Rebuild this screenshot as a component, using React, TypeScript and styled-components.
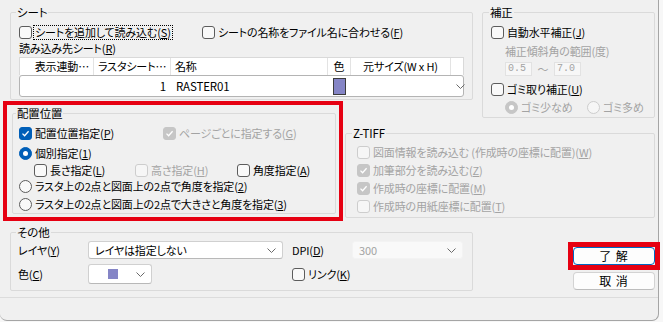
import type { ReactNode } from "react";
import styled, { createGlobalStyle } from "styled-components";

const GlobalStyle = createGlobalStyle`
  html, body {
    margin: 0;
    padding: 0;
  }
  body {
    width: 663px;
    height: 322px;
    overflow: hidden;
    background: #f7f7f7;
    font-family: "Noto Sans CJK JP", "Noto Sans", sans-serif;
    font-size: 11px;
  }
`;

const RED = "#e60012";
const DISABLED = "#a3a3a3";
const ACCENT = "#005fb8";

const Dialog = styled.div`
  box-sizing: border-box;
  width: 659px;
  height: 321px;
  background: #f0f0f0;
  border-right: 1px solid #a5a5a5;
  border-bottom: 1px solid #a5a5a5;
  border-radius: 0 0 7px 7px;
  color: #000;
  font-size: 11px;
  letter-spacing: -0.15px;
  font-feature-settings: "palt";
  line-height: 16px;
  display: flex;
  flex-direction: column;

  u {
    text-underline-offset: 1px;
  }
`;

const Body = styled.div`
  display: grid;
  grid-template-columns: 7px 333px 2px 128px 9px 173px;
  grid-template-rows: 94px 20px 104px 69px;
  padding: 5px 0 0 3px;
`;

const Footer = styled.div`
  margin-top: 5px;
  border-top: 1px solid #dcdcdc;
  flex: 1;
`;

const Group = styled.fieldset<{ $h: number; $pad?: number }>`
  box-sizing: border-box;
  margin: 0;
  min-width: 0;
  padding: 0 ${(p) => p.$pad ?? 8}px;
  height: ${(p) => p.$h}px;
  border: 1px solid #dadada;
  border-radius: 2px;
  align-self: start;
`;

const Legend = styled.legend<{ $x?: number }>`
  padding: 0 1px;
  margin-left: ${(p) => p.$x ?? -3}px;
  line-height: 14px;
  font-size: 11.5px;
`;

const SheetGroup = styled(Group)`
  grid-column: 2 / 5;
  grid-row: 1;
`;

const CorrectGroup = styled(Group)`
  grid-column: 6;
  grid-row: 1 / 3;
`;

const Highlight = styled.div`
  grid-column: 1 / 3;
  grid-row: 2 / 4;
  margin-top: 2px;
  height: 120px;
  box-sizing: border-box;
  border: 4px solid ${RED};
  padding: 1px 3px 0 5px;
`;

const ZGroup = styled(Group)`
  grid-column: 4 / 7;
  grid-row: 3;
  margin-top: 7px;
`;

const OtherGroup = styled(Group)`
  grid-column: 2 / 5;
  grid-row: 4;
  margin-top: 2px;
`;

const Row = styled.div<{ $mt?: number; $indent?: number; $disabled?: boolean }>`
  display: flex;
  align-items: center;
  height: 16px;
  white-space: nowrap;
  margin-top: ${(p) => p.$mt ?? 0}px;
  padding-left: ${(p) => p.$indent ?? 0}px;
  color: ${(p) => (p.$disabled ? DISABLED : "inherit")};
`;

const Option = styled.label<{ $w?: number; $disabled?: boolean }>`
  display: flex;
  align-items: center;
  gap: 3px;
  height: 16px;
  white-space: nowrap;
  color: ${(p) => (p.$disabled ? DISABLED : "#000")};
  ${(p) => (p.$w ? `width: ${p.$w}px; flex: none;` : "")}
`;

const Caption = styled.span<{ $focus?: boolean }>`
  ${(p) =>
    p.$focus
      ? `outline: 1px dotted #000; line-height: 13px; padding: 0 1px; margin-left: -1px;`
      : ""}
`;

const Box = styled.span<{ $checked?: boolean; $disabled?: boolean; $round?: boolean }>`
  box-sizing: border-box;
  width: 13px;
  height: 13px;
  flex: none;
  border-radius: ${(p) => (p.$round ? "50%" : "3px")};
  display: inline-flex;
  align-items: center;
  justify-content: center;
  border: 1px solid
    ${(p) =>
      p.$checked
        ? p.$disabled
          ? "#c6c6c6"
          : ACCENT
        : p.$disabled
          ? "#cdcdcd"
          : "#5c5c5c"};
  background: ${(p) =>
    p.$checked ? (p.$disabled ? "#c6c6c6" : ACCENT) : p.$disabled ? "#f6f6f6" : "#f9f9f9"};
`;

const Dot = styled.span`
  width: 5px;
  height: 5px;
  border-radius: 50%;
  background: #fff;
`;

type ChoiceProps = {
  radio?: boolean;
  checked?: boolean;
  disabled?: boolean;
  focus?: boolean;
  w?: number;
  children: ReactNode;
};

const Choice = ({ radio, checked, disabled, focus, w, children }: ChoiceProps) => (
  <Option $w={w} $disabled={disabled}>
    <Box $checked={checked} $disabled={disabled} $round={radio}>
      {checked && radio && <Dot />}
      {checked && !radio && (
        <svg width="9" height="9" viewBox="0 0 9 9">
          <polyline points="1.5,4.6 3.6,6.7 7.6,2.3" fill="none" stroke="#fff" strokeWidth="1.3" />
        </svg>
      )}
    </Box>
    <Caption $focus={focus}>{children}</Caption>
  </Option>
);

const Chevron = () => (
  <svg width="9" height="5" viewBox="0 0 9 5">
    <polyline points="0.5,0.5 4.5,4.5 8.5,0.5" fill="none" stroke="#6a6a6a" strokeWidth="1" />
  </svg>
);

/* list of raster sheets */
const COLS = "74px 77px 157px 23px 100px 1fr";

const Table = styled.div`
  margin-top: 1px;
`;

const HeadRow = styled.div`
  box-sizing: border-box;
  display: grid;
  grid-template-columns: ${COLS};
  height: 18px;
  background: #fff;
  border: 1px solid #d9d9d9;
  border-bottom: none;
`;

const HeadCell = styled.div<{ $align?: string }>`
  border-right: 1px solid #e3e3e3;
  padding: 0 4px;
  line-height: 17px;
  overflow: hidden;
  white-space: nowrap;
  text-align: ${(p) => p.$align ?? "left"};

  &:last-child {
    border-right: none;
  }
`;

const DataRow = styled.div`
  box-sizing: border-box;
  display: grid;
  grid-template-columns: ${COLS};
  align-items: center;
  height: 22px;
  background: #fff;
  border: 1px solid #b4b4b4;
  border-radius: 3px;
  font-size: 11.5px;
`;

const DataCell = styled.div<{ $align?: string }>`
  padding: 0 5px;
  white-space: nowrap;
  display: flex;
  justify-content: ${(p) =>
    p.$align === "right" ? "flex-end" : p.$align === "center" ? "center" : "flex-start"};
`;

const Swatch = styled.span<{ $size: number; $edge?: boolean }>`
  box-sizing: border-box;
  display: inline-block;
  width: ${(p) => p.$size}px;
  height: ${(p) => p.$size}px;
  background: #8585c6;
  border: ${(p) => (p.$edge ? "1px solid #3c3c3c" : "none")};
`;

/* correction range */
const RangeRow = styled.div`
  display: flex;
  align-items: center;
  margin-top: 3px;
  padding-left: 14px;
  height: 14px;
`;

const NumField = styled.span`
  box-sizing: border-box;
  width: 27px;
  height: 14px;
  border: 1px solid #e2e2e2;
  background: #f7f7f7;
  color: ${DISABLED};
  font-family: "Liberation Mono", monospace;
  font-size: 10px;
  letter-spacing: 0;
  line-height: 12px;
  padding-left: 2px;
`;

const Tilde = styled.span`
  width: 22px;
  text-align: center;
  color: ${DISABLED};
`;

/* other */
const OtherGrid = styled.div`
  display: grid;
  grid-template-columns: 70px 195px 9px 60px 111px;
  grid-template-rows: 18px 20px;
  row-gap: 5px;
  align-items: center;
  margin-top: 2px;
  margin-left: -1px;
`;

const Select = styled.div<{ $w?: number; $disabled?: boolean; $center?: boolean }>`
  box-sizing: border-box;
  height: 100%;
  width: ${(p) => (p.$w ? `${p.$w}px` : "auto")};
  display: flex;
  align-items: center;
  justify-content: space-between;
  padding: 0 6px 0 ${(p) => (p.$center ? 19 : 6)}px;
  background: ${(p) => (p.$disabled ? "#f9f9f9" : "#fff")};
  border: 1px solid ${(p) => (p.$disabled ? "#f3f3f3" : "#d0d0d0")};
  border-bottom-color: ${(p) => (p.$disabled ? "#f3f3f3" : "#b8b8b8")};
  border-radius: 3px;
  color: ${(p) => (p.$disabled ? DISABLED : "#000")};
  white-space: nowrap;
`;

const Actions = styled.div`
  grid-column: 6;
  grid-row: 4;
  display: flex;
  flex-direction: column;
  align-items: flex-end;
  padding-top: 19px;
  margin-right: -5px;
`;

const FocusMark = styled.div`
  border: 5px solid ${RED};
`;

const Button = styled.button<{ $focused?: boolean }>`
  box-sizing: border-box;
  width: 82px;
  height: 18px;
  margin: ${(p) => (p.$focused ? "0" : "2px 5px 0 0")};
  padding: 0;
  background: #fdfdfd;
  border: 1px solid ${(p) => (p.$focused ? "#0067c0" : "#d3d3d3")};
  border-bottom-color: ${(p) => (p.$focused ? "#0067c0" : "#bdbdbd")};
  border-radius: 4px;
  font-family: inherit;
  font-size: 12px;
  line-height: 16px;
  color: #000;
  letter-spacing: 1px;
  white-space: pre;
`;

export default function App() {
  return (
    <>
      <GlobalStyle />
      <Dialog>
        <Body>
          <SheetGroup $h={95}>
            <Legend>シート</Legend>
            <Row $mt={5}>
              <Choice w={183} focus>
                シートを追加して読み込む(<u>S</u>)
              </Choice>
              <Choice>
                シートの名称をファイル名に合わせる(<u>F</u>)
              </Choice>
            </Row>
            <Row>
              <span>
                読み込み先シート(<u>R</u>)
              </span>
            </Row>
            <Table>
              <HeadRow>
                <HeadCell $align="right">表示連動…</HeadCell>
                <HeadCell $align="right">ラスタシート…</HeadCell>
                <HeadCell>名称</HeadCell>
                <HeadCell $align="center">色</HeadCell>
                <HeadCell $align="center">元サイズ(W x H)</HeadCell>
                <HeadCell />
              </HeadRow>
              <DataRow>
                <DataCell />
                <DataCell $align="right">1</DataCell>
                <DataCell>RASTER01</DataCell>
                <DataCell $align="center">
                  <Swatch $size={17} $edge />
                </DataCell>
                <DataCell />
                <DataCell $align="right">
                  <Chevron />
                </DataCell>
              </DataRow>
            </Table>
          </SheetGroup>

          <CorrectGroup $h={113}>
            <Legend $x={-2}>補正</Legend>
            <Row $mt={5}>
              <Choice>
                自動水平補正(<u>J</u>)
              </Choice>
            </Row>
            <Row $mt={3} $indent={14} $disabled>
              補正傾斜角の範囲(度)
            </Row>
            <RangeRow>
              <NumField>0.5</NumField>
              <Tilde>～</Tilde>
              <NumField>7.0</NumField>
            </RangeRow>
            <Row $mt={5}>
              <Choice>
                ゴミ取り補正(<u>U</u>)
              </Choice>
            </Row>
            <Row $mt={2} $indent={14}>
              <Choice radio checked disabled w={82}>
                ゴミ少なめ
              </Choice>
              <Choice radio disabled>
                ゴミ多め
              </Choice>
            </Row>
          </CorrectGroup>

          <Highlight>
            <Group $h={108} $pad={6}>
              <Legend>配置位置</Legend>
              <Row $mt={5}>
                <Choice checked w={144}>
                  配置位置指定(<u>P</u>)
                </Choice>
                <Choice checked disabled>
                  ページごとに指定する(<u>G</u>)
                </Choice>
              </Row>
              <Row $mt={4}>
                <Choice radio checked>
                  個別指定(<u>1</u>)
                </Choice>
              </Row>
              <Row $mt={1} $indent={15}>
                <Choice w={101}>
                  長さ指定(<u>L</u>)
                </Choice>
                <Choice disabled w={102}>
                  高さ指定(<u>H</u>)
                </Choice>
                <Choice>
                  角度指定(<u>A</u>)
                </Choice>
              </Row>
              <Row>
                <Choice radio>
                  ラスタ上の2点と図面上の2点で角度を指定(<u>2</u>)
                </Choice>
              </Row>
              <Row $mt={2}>
                <Choice radio>
                  ラスタ上の2点と図面上の2点で大きさと角度を指定(<u>3</u>)
                </Choice>
              </Row>
            </Group>
          </Highlight>

          <ZGroup $h={92} $pad={11}>
            <Legend $x={-5}>Z-TIFF</Legend>
            <Row $mt={4}>
              <Choice disabled>
                図面情報を読み込む (作成時の座標に配置)(<u>W</u>)
              </Choice>
            </Row>
            <Row $mt={2}>
              <Choice checked disabled>
                加筆部分を読み込む(<u>Z</u>)
              </Choice>
            </Row>
            <Row $mt={2}>
              <Choice checked disabled>
                作成時の座標に配置(<u>M</u>)
              </Choice>
            </Row>
            <Row $mt={2}>
              <Choice disabled>
                作成時の用紙座標に配置(<u>T</u>)
              </Choice>
            </Row>
          </ZGroup>

          <OtherGroup $h={66}>
            <Legend>その他</Legend>
            <OtherGrid>
              <span>
                レイヤ(<u>Y</u>)
              </span>
              <Select>
                レイヤは指定しない
                <Chevron />
              </Select>
              <span />
              <span>
                DPI(<u>D</u>)
              </span>
              <Select $disabled>
                300
                <Chevron />
              </Select>
              <span>
                色(<u>C</u>)
              </span>
              <Select $w={64} $center>
                <Swatch $size={10} />
                <Chevron />
              </Select>
              <span />
              <Choice>
                リンク(<u>K</u>)
              </Choice>
            </OtherGrid>
          </OtherGroup>

          <Actions>
            <FocusMark>
              <Button $focused>{"了 解"}</Button>
            </FocusMark>
            <Button>{"取 消"}</Button>
          </Actions>
        </Body>
        <Footer />
      </Dialog>
    </>
  );
}
